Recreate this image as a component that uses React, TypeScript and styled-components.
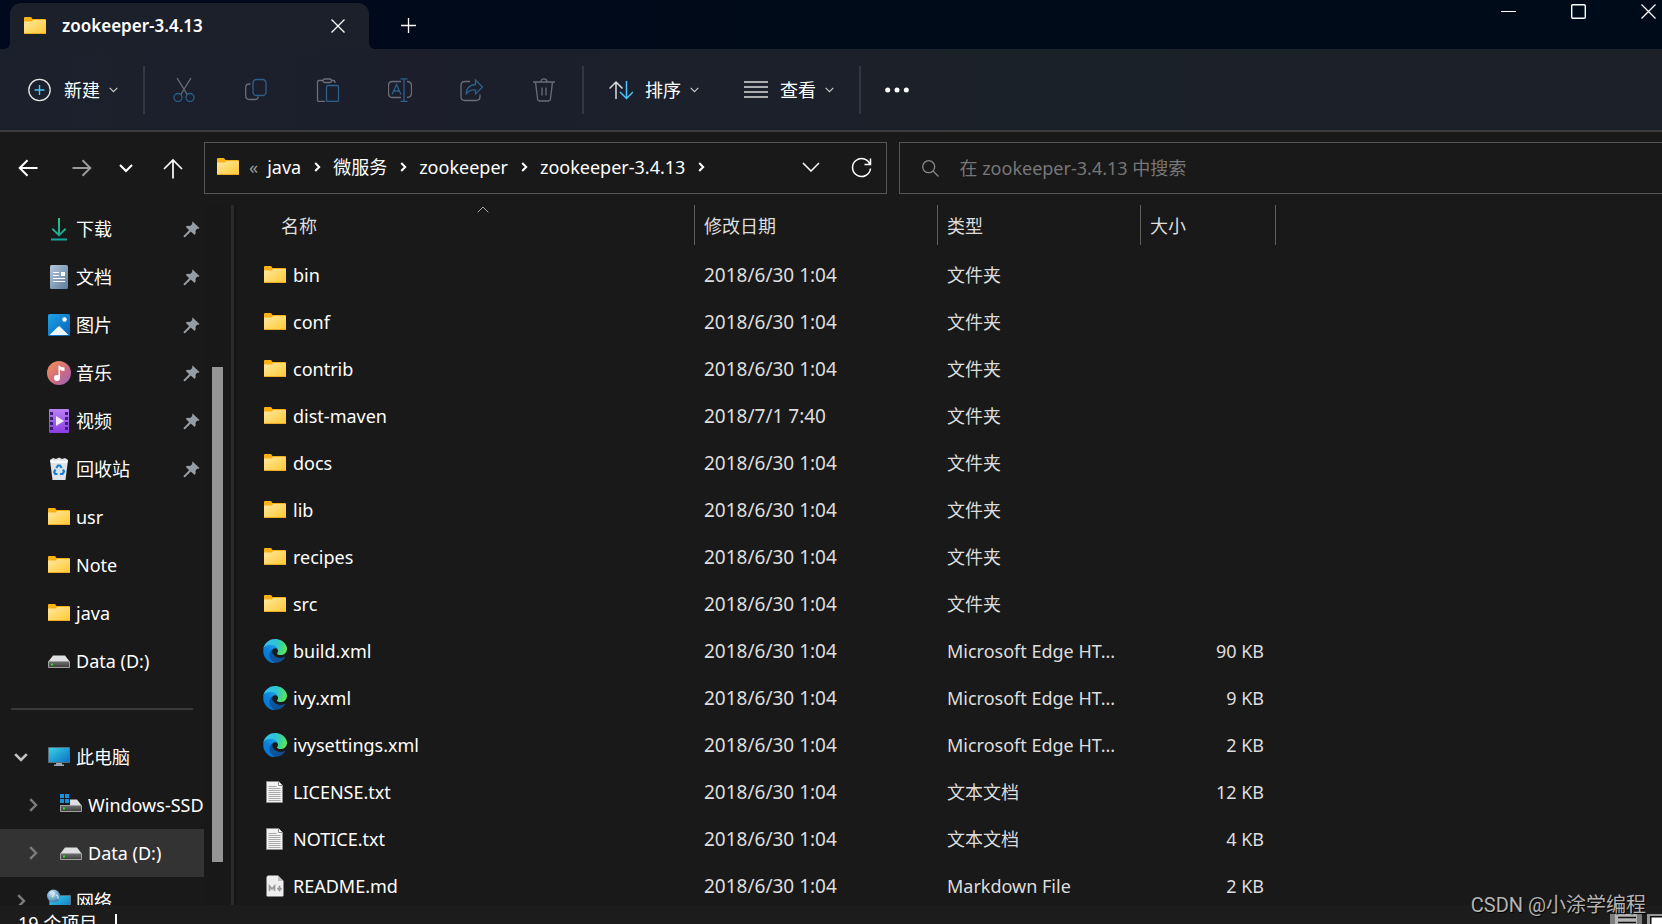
import React from "react";
import styled, { createGlobalStyle } from "styled-components";

const GlobalStyle = createGlobalStyle`
  * { box-sizing: border-box; }
  body {
    margin: 0;
    background: #191919;
    color: #fff;
    font: 18px/24px "Noto Sans", "Noto Sans CJK SC", sans-serif;
    overflow: hidden;
  }
  button, input { font: inherit; color: inherit; border: 0; padding: 0; background: none; outline: 0; }
  svg { display: block; flex: none; }
  a { color: inherit; text-decoration: none; }
  ul, ol { list-style: none; margin: 0; padding: 0; }
`;

const Shell = styled.div`
  position: relative;
  display: flex;
  flex-direction: column;
  height: 100vh;
  overflow: hidden;
`;

/* ---------- title bar ---------- */
const TitleBar = styled.header`
  flex: none;
  display: flex;
  align-items: flex-end;
  height: 49px;
  padding-left: 10px;
  background: linear-gradient(90deg, #00091d, #000b19 50%);
`;
const Tab = styled.div`
  position: relative;
  display: flex;
  align-items: center;
  flex: 0 1 359px;
  height: 46px;
  padding: 0 24px 1px 13px;
  border-radius: 11px 11px 0 0;
  background: #1b202b;
  &::before, &::after {
    content: "";
    position: absolute;
    bottom: 0;
    width: 6px;
    height: 6px;
  }
  &::before { left: -6px; background: radial-gradient(circle at 0 0, transparent 6px, #1b202b 6px); }
  &::after { right: -6px; background: radial-gradient(circle at 100% 0, transparent 6px, #1b202b 6px); }
`;
const TabTitle = styled.span`
  flex: 1;
  margin-left: 15px;
  font-size: 17px;
  font-weight: 600;
`;
const NewTab = styled.button`
  display: grid;
  place-items: center;
  width: 48px;
  height: 46px;
  margin-left: 15px;
  padding-bottom: 2px;
`;
const WindowButtons = styled.div`
  align-self: flex-start;
  display: flex;
  gap: 55px;
  margin: 4px 6px 0 auto;
`;
const PlainButton = styled.button`
  display: grid;
  place-items: center;
`;

/* ---------- command bar ---------- */
const CommandBar = styled.div`
  flex: none;
  display: flex;
  align-items: center;
  height: 83px;
  padding-left: 6px;
  border-bottom: 2px solid #3c3c3c;
  background: linear-gradient(90deg, #1b212c, #1c1e2b 25%, #1b202b 40%, #1b2129 60%, #1c2129);
`;
const MenuButton = styled.button`
  display: flex;
  align-items: center;
  height: 56px;
  padding: 0 23px 0 22px;
`;
const MenuLabel = styled.span`
  margin: 0 9px 0 12px;
`;
const ToolButton = styled.button<{ $width?: number }>`
  display: grid;
  place-items: center;
  width: ${(p) => p.$width ?? 72}px;
  height: 56px;
`;
const Divider = styled.span`
  width: 2px;
  height: 48px;
  margin: 0 3px 0 2px;
  background: #333742;
`;

/* ---------- address row ---------- */
const AddressRow = styled.div`
  flex: none;
  display: flex;
  padding-top: 10px;
  height: 72px;
`;
const NavButtons = styled.div`
  flex: none;
  display: flex;
  align-items: center;
  width: 204px;
  height: 52px;
  padding-left: 18px;
`;
const NavButton = styled.button<{ $after: number }>`
  margin-right: ${(p) => p.$after}px;
`;
const AddressBox = styled.div`
  flex: 656 1 0;
  min-width: 0;
  display: flex;
  align-items: center;
  height: 52px;
  padding: 0 14px 2px 11px;
  border: 1px solid #555;
`;
const Ellipsis = styled.span`
  margin: 0 9px;
  color: #9a9a9a;
`;
const Crumbs = styled.ol`
  flex: 1;
  display: flex;
  white-space: nowrap;
`;
const Crumb = styled.li`
  display: flex;
  align-items: center;
  gap: 13px;
  margin-right: 12px;
`;
const AddressActions = styled.div`
  display: flex;
  gap: 31px;
`;
const SearchBox = styled.label`
  flex: 739 1 0;
  min-width: 0;
  display: flex;
  align-items: center;
  gap: 20px;
  height: 52px;
  margin-left: 12px;
  padding-left: 22px;
  border: 1px solid #555;
  border-right: 0;
`;
const SearchInput = styled.input`
  flex: 1;
  min-width: 0;
  height: 28px;
  &::placeholder { color: #777; opacity: 1; }
`;

/* ---------- body ---------- */
const Body = styled.div`
  flex: 1;
  min-height: 0;
  display: flex;
  overflow: hidden;
`;
const Sidebar = styled.nav`
  flex: 0 0 204px;
  overflow: hidden;
  padding-top: 1px;
`;
const SideLink = styled.a<{ $indent: number; $selected?: boolean }>`
  display: flex;
  align-items: center;
  height: 48px;
  padding: 0 4px 0 ${(p) => p.$indent}px;
  background: ${(p) => (p.$selected ? "#333" : "transparent")};
  white-space: nowrap;
`;
const Expander = styled.span<{ $width: number }>`
  flex: 0 0 ${(p) => p.$width}px;
  display: flex;
`;
const SideText = styled.span`
  flex: 1;
  margin-left: 5px;
`;
const SideRule = styled.li`
  height: 48px;
  padding: 23px 11px 0;
  &::after { content: ""; display: block; height: 2px; background: #3a3a3a; }
`;
const ScrollTrack = styled.div`
  flex: 0 0 27px;
  padding: 163px 8px 43px;
  background: #181818;
`;
const ScrollThumb = styled.div`
  height: 100%;
  background: #959595;
`;
const Splitter = styled.div`
  flex: 0 0 5px;
  margin-top: 1px;
  border-left: 3px solid #2b2b2b;
  background: #141414;
`;
const FilePane = styled.main`
  flex: 1;
  min-width: 0;
  overflow: hidden;
`;
const FileTable = styled.table`
  table-layout: fixed;
  width: 1040px;
  border-collapse: collapse;
`;
const HeadCell = styled.th<{ $width: number }>`
  width: ${(p) => p.$width}px;
  height: 47px;
  padding: 1px 0 0;
  vertical-align: top;
  font-weight: 400;
  text-align: left;
  color: #dedede;
`;
const HeadInner = styled.div<{ $inset?: number }>`
  position: relative;
  height: 40px;
  margin-left: ${(p) => p.$inset ?? 0}px;
  padding-left: 9px;
  border-right: 1px solid #5e5e5e;
  line-height: 42px;
`;
const SortCaret = styled.span`
  position: absolute;
  top: 1px;
  left: calc(50% - 6px);
`;
const Cell = styled.td<{ $right?: boolean }>`
  height: 47px;
  padding: 0 ${(p) => (p.$right ? 12 : 9)}px 0 9px;
  text-align: ${(p) => (p.$right ? "right" : "left")};
  color: #dedede;
  white-space: nowrap;
`;
const DateCell = styled(Cell)`
  font-size: 19px;
`;
const NameCell = styled(Cell)`
  padding-left: 27px;
  color: #fff;
`;
const NameLink = styled.a`
  display: flex;
  align-items: center;
  gap: 6px;
`;

/* ---------- status bar ---------- */
const StatusBar = styled.footer`
  flex: 0 0 19px;
  display: flex;
  align-items: flex-start;
  padding: 6px 0 0 18px;
  overflow: hidden;
  background: #1c1c1c;
`;
const Caret = styled.span`
  width: 2px;
  height: 24px;
  margin: 3px auto 0 18px;
  background: #fff;
`;
const ViewSwitch = styled.div`
  display: flex;
  gap: 5px;
  margin-top: 3px;
`;
const Watermark = styled.span`
  position: absolute;
  right: 16px;
  bottom: 7px;
  font: 20px/24px Roboto, "Noto Sans CJK SC", sans-serif;
  color: #b4b4b4;
  text-shadow: 1px 1px 1px #000;
`;

/* ---------- icons ---------- */
const Stroke = ({ w, h, d, color = "#fff", sw = 1 }: { w: number; h: number; d: string; color?: string; sw?: number }) => (
  <svg width={w} height={h} viewBox={`0 0 ${w} ${h}`} fill="none" stroke={color} strokeWidth={sw}>
    <path d={d} />
  </svg>
);
const SmallChevron = () => <Stroke w={9} h={6} d="M.7.8 4.5 4.6 8.3.8" color="#c8c8c8" sw={1.2} />;

const HiddenSvg = styled.svg`
  position: absolute;
`;
const Defs = () => (
  <HiddenSvg width="0" height="0" aria-hidden="true">
    <defs>
      <linearGradient id="folder" x1="0" y1="0" x2="1" y2="1"><stop stopColor="#ffe8a0" /><stop offset="1" stopColor="#ffc933" /></linearGradient>
      <linearGradient id="down" x1="0" y1="0" x2="0" y2="1"><stop stopColor="#2fc37f" /><stop offset="1" stopColor="#12a5a0" /></linearGradient>
      <linearGradient id="doc" x1="0" y1="0" x2="1" y2="1"><stop stopColor="#b4c8dc" /><stop offset="1" stopColor="#5d7b9c" /></linearGradient>
      <linearGradient id="pic" x1="0" y1="0" x2="1" y2="1"><stop stopColor="#1fa4e8" /><stop offset="1" stopColor="#0860b4" /></linearGradient>
      <linearGradient id="music" x1="0" y1="0" x2="1" y2="1"><stop stopColor="#f49455" /><stop offset=".55" stopColor="#cf6c80" /><stop offset="1" stopColor="#8f60c0" /></linearGradient>
      <linearGradient id="video" x1="0" y1="0" x2="0" y2="1"><stop stopColor="#b981f5" /><stop offset="1" stopColor="#8a3ce4" /></linearGradient>
      <linearGradient id="screen" x1="0" y1="0" x2="1" y2="1"><stop stopColor="#3ad3e6" /><stop offset="1" stopColor="#0a70c4" /></linearGradient>
      <linearGradient id="disk" x1="0" y1="0" x2="0" y2="1"><stop stopColor="#707070" /><stop offset="1" stopColor="#3c3c3c" /></linearGradient>
      <radialGradient id="globe" cx=".4" cy=".3" r=".7"><stop stopColor="#cfeaf7" /><stop offset="1" stopColor="#3a7fae" /></radialGradient>
      <linearGradient id="edgeA" x1="60" y1="0" x2="235" y2="0" gradientUnits="userSpaceOnUse"><stop stopColor="#0c59a4" /><stop offset="1" stopColor="#114a8b" /></linearGradient>
      <linearGradient id="edgeB" x1="140" y1="80" x2="50" y2="230" gradientUnits="userSpaceOnUse"><stop stopColor="#1b9de2" /><stop offset=".5" stopColor="#0c7fdc" /><stop offset="1" stopColor="#0078d4" /></linearGradient>
      <radialGradient id="edgeC" cx="30" cy="40" r="240" gradientUnits="userSpaceOnUse"><stop stopColor="#35c1f1" /><stop offset=".45" stopColor="#2cc4d8" /><stop offset=".75" stopColor="#40d68c" /><stop offset="1" stopColor="#66eb4e" /></radialGradient>
    </defs>
  </HiddenSvg>
);

const Folder = () => (
  <svg width="24" height="24" viewBox="0 0 24 24">
    <path d="M1 4a1 1 0 0 1 1-1h6l1.500 2H22a1 1 0 0 1 1 1v4H1z" fill="#fbb014" />
    <path d="M1 7.500h8L10 6h13v13.500H1z" fill="url(#folder)" />
    <path d="M1 19.500h22" stroke="#eeaa22" />
  </svg>
);
const Disk = ({ windows = false }: { windows?: boolean }) => (
  <svg width="24" height="24" viewBox="0 0 24 24">
    <path d="M6 6.500h12l5 6.500H1z" fill="#dfdfe2" />
    <path d="M1.500 12.500h21v6h-21z" fill="url(#disk)" stroke="#a0a0a0" />
    <path d="M4 14.500h2v2H4z" fill="#2be02b" />
    {windows && (
      <>
        <path d="M0 1h11v11H0z" fill="#191919" />
        <path d="M1 1h4v4H1zM6 1h4v4H6zM1 6h4v4H1zM6 6h4v4H6z" fill="#1592e4" />
      </>
    )}
  </svg>
);
const Download = () => (
  <svg width="24" height="24" viewBox="0 0 24 24" fill="url(#down)">
    <path d="M11 1h2v15l5-5 1.300 1.400L12 19.600l-7.300-7.200L6 11l5 5zM4 21.500h16v2H4z" />
  </svg>
);
const Document = () => (
  <svg width="24" height="24" viewBox="0 0 24 24">
    <rect x="3" y="0" width="18" height="24" rx="1.500" fill="url(#doc)" />
    <path d="M6 7.500h6M6 10.500h6M6 13.500h12M6 16.500h12" stroke="#fff" strokeWidth="1.200" />
    <path d="M14 7h4v4h-4z" fill="#fff" />
  </svg>
);
const Picture = () => (
  <svg width="24" height="24" viewBox="0 0 24 24">
    <rect x="1" y="1" width="22" height="22" rx="1.500" fill="url(#pic)" />
    <path d="m2.500 22 8.700-8.500a1.200 1.200 0 0 1 1.600 0L21.500 22z" fill="#eef7fd" />
    <circle cx="17.500" cy="6.500" r="2.200" fill="#fff" />
  </svg>
);
const Music = () => (
  <svg width="24" height="24" viewBox="0 0 24 24">
    <circle cx="12" cy="12" r="12" fill="url(#music)" />
    <circle cx="10" cy="17" r="3" fill="#fff" />
    <path d="M11.500 17V4q1.500 2 6 2.500V10q-3 0-4.500-1.500V17z" fill="#fff" />
  </svg>
);
const Video = () => (
  <svg width="24" height="24" viewBox="0 0 24 24">
    <rect x="2" width="20" height="24" rx="1" fill="url(#video)" />
    <path d="M3 3h3v3H3zM3 8h3v3H3zM3 13h3v3H3zM3 18h3v3H3zM18 3h3v3h-3zM18 8h3v3h-3zM18 13h3v3h-3zM18 18h3v3h-3z" fill="#3c1f78" />
    <path d="m9 7 8 5-8 5z" fill="#f4ecfd" />
  </svg>
);
const Recycle = () => (
  <svg width="24" height="24" viewBox="0 0 24 24">
    <path d="m3 3 3-2 3 1 3-1.500L15 2l3-1 3 2-2.500 20h-13z" fill="#dfe4e8" />
    <path d="m3 3 4 1 5-.5 5 .5 4-1-1 3H4z" fill="#f8fafb" />
    <g fill="none" stroke="#1480d8" strokeWidth="2.200"><path d="m9.300 11 1.700-2.500h2L14.700 11M16 12.500l1 2-1.500 2.500H13M10.500 17H8.200l-1-2 1.300-2.500" /></g>
  </svg>
);
const Monitor = () => (
  <svg width="24" height="24" viewBox="0 0 24 24">
    <path d="M1.500 2.500h21v15h-21z" fill="url(#screen)" stroke="#55707c" />
    <path d="M9 18h6v1.500h2V21H7v-1.500h2z" fill="#9aa7ae" />
  </svg>
);
const Network = () => (
  <svg width="24" height="24" viewBox="0 0 24 24">
    <path d="M2.500 6.500h21v14h-21z" fill="url(#screen)" stroke="#55707c" />
    <circle cx="6.500" cy="7" r="6.500" fill="url(#globe)" />
    <path d="M3 4q3-3 4 0t-2 4M9 6q3 0 2 4" fill="none" stroke="#e6f4fa" />
  </svg>
);
const Edge = () => (
  <svg width="24" height="24" viewBox="0 0 256 256">
    <path fill="url(#edgeA)" d="M231.070 190.540c-3.380 1.760-6.850 3.340-10.410 4.710-11.220 4.190-23.110 6.340-35.090 6.330-46.250 0-86.540-31.810-86.540-72.630.12-11.160 6.290-21.390 16.120-26.700-41.830 1.760-52.580 45.350-52.580 70.880 0 72.190 66.520 79.510 80.860 79.510 7.730 0 19.390-2.250 26.390-4.460l1.280-.43c26.850-9.280 49.740-27.450 64.980-51.590a3.620 3.620 0 0 0-5.010-5.620z" />
    <path fill="url(#edgeB)" d="M105.730 241.420a79.950 79.950 0 0 1-22.950-21.530 81.760 81.760 0 0 1-12.940-68.550 81.730 81.730 0 0 1 45.440-49.190c3.120-1.470 8.450-4.130 15.540-4a32.350 32.350 0 0 1 25.690 13 31.900 31.900 0 0 1 6.360 18.660c0-.21 24.460-79.600-80-79.600-43.900 0-80 41.660-80 78.210-.17 19.320 3.930 38.440 12 56 28.130 60.060 94.500 90.820 157.680 70.840a75.420 75.420 0 0 1-66.820-13.840z" />
    <path fill="url(#edgeC)" d="M152.330 148.860c-.81 1.050-3.300 2.500-3.300 5.660 0 2.610 1.700 5.120 4.720 7.230 14.380 10 41.490 8.680 41.560 8.680a59.560 59.560 0 0 0 30.270-8.350 61.380 61.380 0 0 0 30.430-52.880c.26-22.410-8-37.310-11.340-43.910C223.460 23.840 177.720.2 128 .2a128 128 0 0 0-128 126.200c.48-36.540 36.800-66.050 80-66.050 3.500 0 23.460.34 42 10.070 16.340 8.580 24.900 18.940 30.850 29.210 6.180 10.670 7.280 24.150 7.280 29.520 0 5.370-2.740 13.330-7.800 19.910z" />
  </svg>
);
const TextFile = () => (
  <svg width="24" height="24" viewBox="0 0 24 24">
    <path d="M3.500 1.500h12l4 4v17h-16z" fill="#f2f2f2" stroke="#8a8a8a" />
    <path d="M15.500 1.500v4h4" fill="#fff" stroke="#8a8a8a" />
    <path d="M5.500 6.500h8M5.500 8.500h12M5.500 10.500h12M5.500 12.500h12M5.500 14.500h12M5.500 16.500h12M5.500 18.500h12M5.500 20.500h12" stroke="#a9a9a9" />
  </svg>
);
const MarkdownFile = () => (
  <svg width="24" height="24" viewBox="0 0 24 24">
    <path d="M5 1.500h10l5.500 5.500v14.500a1 1 0 0 1-1 1H4.500a1 1 0 0 1-1-1V3z" fill="#eee" />
    <path d="M15 1.500V7h5.500z" fill="#bcbcbc" />
    <path d="M6.500 17v-5l2.500 3 2.500-3v5M16.500 11.500v4M14.500 14l2 2.500 2-2.500" fill="none" stroke="#999" strokeWidth="1.700" />
  </svg>
);
const Pin = () => (
  <svg width="17" height="17" viewBox="0 0 17 17" fill="#939da3">
    <path d="M9.500.5 16.500 7q-.8 1.200-2.600.7L12.500 10q1 2.500-.8 4L7.800 10.600 2 16.300.6 16l.1-1.300 5.400-5.400L2.700 5.700Q4.500 4 7 5L9.300 3Q8.800 1.500 9.500.5z" />
  </svg>
);
const Expand = ({ open = false }: { open?: boolean }) =>
  open ? <Stroke w={14} h={9} d="m1.200 1.200 5.800 5.800 5.800-5.800" color="#c4c4c4" sw={2.600} /> : <Stroke w={9} h={14} d="m1.200 1.200 5.800 5.800-5.800 5.800" color="#7c7c7c" sw={2.400} />;

const toolIcons: [string, React.ReactNode][] = [
  ["剪切", <><path d="M5 0 15.500 17M19 0 8.500 17" stroke="#6b6e78" /><circle cx="6" cy="19.500" r="4" /><circle cx="18" cy="19.500" r="4" /></>],
  ["复制", <><path d="M6.500 6H5Q1.700 6 1.700 9.500v8q0 4 4 4h5q3.500 0 3.500-3" stroke="#6b6e78" /><rect x="9" y="1.500" width="13" height="16" rx="3.500" /></>],
  ["粘贴", <><path d="M7 2.500H3q-1.500 0-1.500 1.500v18q0 1.500 1.500 1.500h6M15 2.500h2.500Q19 2.500 19 5" stroke="#6b6e78" /><rect x="7" y="1" width="8.500" height="3.500" rx="1.700" stroke="#6b6e78" /><rect x="10.500" y="7.500" width="12" height="16" rx="1.500" /></>],
  ["重命名", <><path d="M13 3.500H4.500q-4 0-4 4v8q0 4 4 4H13M19 3.500q4.500 0 4.500 4.500v7q0 4.500-4.500 4.500" stroke="#6b6e78" /><path d="m4 16.500 4.500-10 4.500 10M5.800 13h5.500M12.500.8h7M12.500 23.500h7M16 1v22" /></>],
  ["共享", <><path d="M10 3.500H5q-4 0-4 4v11q0 4 4 4h11q4 0 4-4v-2" stroke="#6b6e78" /><path d="M15.500 2 22.500 9l-7 7v-4Q9 11.500 6 16.500 6.500 7 15.500 6.500z" /></>],
  ["删除", <><path d="M1 4h22M3.500 4l2 16.500Q5.700 23 8 23h8q2.300 0 2.500-2.500l2-16.500M9 4q0-3.200 3-3.200T15 4M10 9.500v8M14 9.500v8" stroke="#6b6e78" /></>],
];

const crumbs = ["java", "微服务", "zookeeper", "zookeeper-3.4.13"];
const pinned: [string, React.ReactNode][] = [
  ["下载", <Download />], ["文档", <Document />], ["图片", <Picture />], ["音乐", <Music />], ["视频", <Video />], ["回收站", <Recycle />],
];
const folders = ["usr", "Note", "java"];

type FileRow = { name: string; kind: "folder" | "xml" | "txt" | "md"; size?: string; date?: string };
const files: FileRow[] = [
  { name: "bin", kind: "folder" },
  { name: "conf", kind: "folder" },
  { name: "contrib", kind: "folder" },
  { name: "dist-maven", kind: "folder", date: "2018/7/1 7:40" },
  { name: "docs", kind: "folder" },
  { name: "lib", kind: "folder" },
  { name: "recipes", kind: "folder" },
  { name: "src", kind: "folder" },
  { name: "build.xml", kind: "xml", size: "90 KB" },
  { name: "ivy.xml", kind: "xml", size: "9 KB" },
  { name: "ivysettings.xml", kind: "xml", size: "2 KB" },
  { name: "LICENSE.txt", kind: "txt", size: "12 KB" },
  { name: "NOTICE.txt", kind: "txt", size: "4 KB" },
  { name: "README.md", kind: "md", size: "2 KB" },
];
const kinds = {
  folder: { label: "文件夹", icon: <Folder /> },
  xml: { label: "Microsoft Edge HT...", icon: <Edge /> },
  txt: { label: "文本文档", icon: <TextFile /> },
  md: { label: "Markdown File", icon: <MarkdownFile /> },
};

export default function App() {
  return (
    <Shell>
      <GlobalStyle />
      <Defs />
      <TitleBar>
        <Tab>
          <Folder />
          <TabTitle>zookeeper-3.4.13</TabTitle>
          <PlainButton aria-label="关闭标签页"><Stroke w={14} h={14} d="m.5.5 13 13m0-13-13 13" sw={1.300} /></PlainButton>
        </Tab>
        <NewTab aria-label="新标签页"><Stroke w={15} h={15} d="M7.500 0v15M0 7.500h15" sw={1.300} /></NewTab>
        <WindowButtons>
          <PlainButton aria-label="最小化"><Stroke w={15} h={15} d="M0 7.500h15" /></PlainButton>
          <PlainButton aria-label="最大化">
            <svg width="15" height="15" viewBox="0 0 15 15" fill="none" stroke="#fff" strokeWidth="1.400"><rect x=".7" y=".7" width="13.600" height="13.600" rx="1.200" /></svg>
          </PlainButton>
          <PlainButton aria-label="关闭"><Stroke w={15} h={15} d="m.5.5 14 14m0-14-14 14" sw={1.300} /></PlainButton>
        </WindowButtons>
      </TitleBar>

      <CommandBar>
        <MenuButton>
          <svg width="24" height="24" viewBox="0 0 24 24" fill="none">
            <circle cx="11.500" cy="12" r="10.700" stroke="#e6e6e6" strokeWidth="1.300" />
            <path d="M11.500 7v10M6.500 12h10" stroke="#4cc2ff" strokeWidth="1.400" />
          </svg>
          <MenuLabel>新建</MenuLabel>
          <SmallChevron />
        </MenuButton>
        <Divider />
        {toolIcons.map(([label, art]) => (
          <ToolButton key={label} aria-label={label}>
            <svg width="24" height="24" viewBox="0 0 24 24" fill="none" stroke="#2b618a" strokeWidth="1.300">{art}</svg>
          </ToolButton>
        ))}
        <Divider />
        <MenuButton>
          <svg width="24" height="24" viewBox="0 0 24 24" fill="none" strokeWidth="1.500">
            <path d="M7 21V4M.5 10.500 7 4l6.500 6.500" stroke="#dcdcdc" />
            <path d="M17.500 3v17M11 14l6.500 6.500L24 14" stroke="#4cc2ff" />
          </svg>
          <MenuLabel>排序</MenuLabel>
          <SmallChevron />
        </MenuButton>
        <MenuButton>
          <Stroke w={24} h={17} d="M0 1h24M0 6h24M0 11h24M0 16h24" color="#dcdcdc" sw={1.300} />
          <MenuLabel>查看</MenuLabel>
          <SmallChevron />
        </MenuButton>
        <Divider />
        <ToolButton $width={66} aria-label="更多">
          <svg width="24" height="6" viewBox="0 0 24 6" fill="#fff"><circle cx="2.700" cy="3" r="2.500" /><circle cx="12" cy="3" r="2.500" /><circle cx="21.300" cy="3" r="2.500" /></svg>
        </ToolButton>
      </CommandBar>

      <AddressRow>
        <NavButtons>
          <NavButton $after={34} aria-label="后退"><Stroke w={20} h={18} d="M19.500 9H2M9.500 1.200 1.700 9l7.800 7.800" sw={2} /></NavButton>
          <NavButton $after={27} aria-label="前进"><Stroke w={20} h={18} d="M.5 9H18M10.500 1.200 18.300 9l-7.800 7.800" color="#9a9a9a" sw={2} /></NavButton>
          <NavButton $after={30} aria-label="最近的位置"><Stroke w={14} h={9} d="m1 1 6 6 6-6" sw={2} /></NavButton>
          <NavButton $after={0} aria-label="向上"><Stroke w={20} h={21} d="M10 20.500V2M1 11l9-9 9 9" sw={1.700} /></NavButton>
        </NavButtons>
        <AddressBox>
          <Folder />
          <Ellipsis>«</Ellipsis>
          <Crumbs>
            {crumbs.map((c) => (
              <Crumb key={c}>
                <a href="#">{c}</a>
                <Stroke w={7} h={10} d="m1.200 1 4 4-4 4" sw={2} />
              </Crumb>
            ))}
          </Crumbs>
          <AddressActions>
            <PlainButton aria-label="历史记录"><Stroke w={18} h={10} d="m1 1 8 8 8-8" sw={1.500} /></PlainButton>
            <PlainButton aria-label="刷新"><Stroke w={21} h={21} d="M19.200 8A9 9 0 1 0 19.500 11.500M19.500 1.500V7.500H13.500" sw={1.500} /></PlainButton>
          </AddressActions>
        </AddressBox>
        <SearchBox>
          <svg width="17" height="17" viewBox="0 0 17 17" fill="none" stroke="#888" strokeWidth="1.300"><circle cx="6.700" cy="6.700" r="6" /><path d="m11 11 5.500 5.500" /></svg>
          <SearchInput type="text" aria-label="搜索" placeholder="在 zookeeper-3.4.13 中搜索" />
        </SearchBox>
      </AddressRow>

      <Body>
        <Sidebar>
          <ul>
            {pinned.map(([label, icon]) => (
              <li key={label}><SideLink href="#" $indent={47}>{icon}<SideText>{label}</SideText><Pin /></SideLink></li>
            ))}
            {folders.map((label) => (
              <li key={label}><SideLink href="#" $indent={47}><Folder /><SideText>{label}</SideText></SideLink></li>
            ))}
            <li><SideLink href="#" $indent={47}><Disk /><SideText>Data (D:)</SideText></SideLink></li>
            <SideRule />
            <li><SideLink href="#" $indent={14}><Expander $width={33}><Expand open /></Expander><Monitor /><SideText>此电脑</SideText></SideLink></li>
            <li><SideLink href="#" $indent={29}><Expander $width={30}><Expand /></Expander><Disk windows /><SideText>Windows-SSD (C:)</SideText></SideLink></li>
            <li><SideLink href="#" $indent={29} $selected><Expander $width={30}><Expand /></Expander><Disk /><SideText>Data (D:)</SideText></SideLink></li>
            <li><SideLink href="#" $indent={17}><Expander $width={30}><Expand /></Expander><Network /><SideText>网络</SideText></SideLink></li>
          </ul>
        </Sidebar>
        <ScrollTrack><ScrollThumb /></ScrollTrack>
        <Splitter />
        <FilePane>
          <FileTable>
            <thead>
              <tr>
                <HeadCell $width={459}>
                  <HeadInner $inset={36}>名称<SortCaret><Stroke w={12} h={7} d="m.7 6.300 5.300-5.300 5.300 5.300" color="#aaa" /></SortCaret></HeadInner>
                </HeadCell>
                <HeadCell $width={243}><HeadInner>修改日期</HeadInner></HeadCell>
                <HeadCell $width={203}><HeadInner>类型</HeadInner></HeadCell>
                <HeadCell $width={135}><HeadInner>大小</HeadInner></HeadCell>
              </tr>
            </thead>
            <tbody>
              {files.map((f) => (
                <tr key={f.name}>
                  <NameCell><NameLink href="#">{kinds[f.kind].icon}{f.name}</NameLink></NameCell>
                  <DateCell>{f.date ?? "2018/6/30 1:04"}</DateCell>
                  <Cell>{kinds[f.kind].label}</Cell>
                  <Cell $right>{f.size}</Cell>
                </tr>
              ))}
            </tbody>
          </FileTable>
        </FilePane>
      </Body>

      <StatusBar>
        <span>19 个项目</span>
        <Caret />
        <ViewSwitch>
          <PlainButton aria-label="详细信息">
            <svg width="32" height="24" viewBox="0 0 32 24"><path d="M0 0h32v24H0z" fill="#7d7d7d" /><path d="M5 0h22v24H5z" fill="#b5b5b5" /><path d="M8 3.500h18M8 8.500h18M8 13.500h18" stroke="#111" strokeWidth="1.500" /></svg>
          </PlainButton>
          <PlainButton aria-label="大图标">
            <svg width="15" height="24" viewBox="0 0 15 24"><path d="M0 0h15v24H0z" fill="#999" /><path d="M3 2h12v22H3z" fill="#111" /><path d="M4.500 3.500H15V24H4.500z" fill="#fff" /></svg>
          </PlainButton>
        </ViewSwitch>
      </StatusBar>
      <Watermark>CSDN @小涂学编程</Watermark>
    </Shell>
  );
}
